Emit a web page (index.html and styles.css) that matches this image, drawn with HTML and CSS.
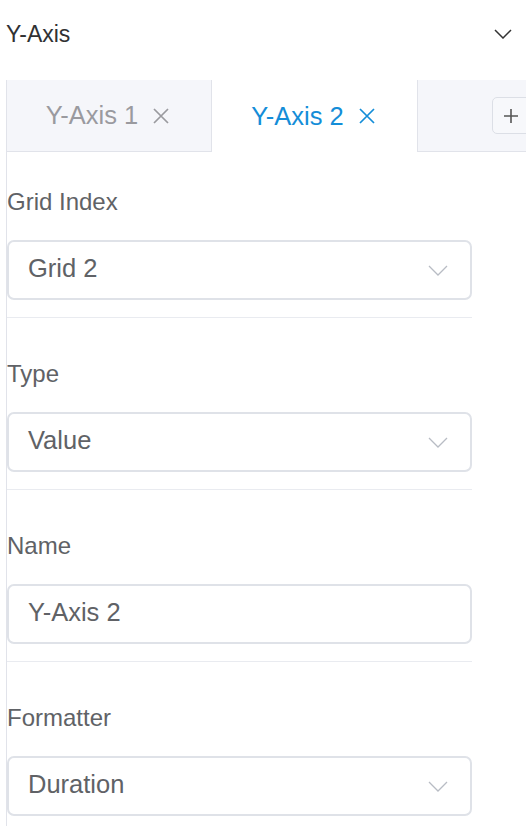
FILE: index.html
```html
<!DOCTYPE html>
<html>
<head>
<meta charset="utf-8">
<link rel="stylesheet" href="styles.css">
</head>
<body>
<div class="header">
  <span class="header-title">Y-Axis</span>
  <svg class="header-chev" width="18" height="10" viewBox="0 0 18 10"><polyline points="1,1 9,9 17,1" fill="none" stroke="#333" stroke-width="1.5"/></svg>
</div>
<div class="panel">
  <div class="tabs">
    <div class="tab">
      <span>Y-Axis 1</span>
      <svg class="x" width="16" height="16" viewBox="0 0 16 16"><path d="M1 1L15 15M15 1L1 15" stroke="#9a9a9f" stroke-width="1.7" fill="none"/></svg>
    </div>
    <div class="tab active">
      <span>Y-Axis 2</span>
      <svg class="x" width="16" height="16" viewBox="0 0 16 16"><path d="M1 1L15 15M15 1L1 15" stroke="#148dd8" stroke-width="1.7" fill="none"/></svg>
    </div>
    <div class="tab-rest">
      <div class="add-btn">
        <svg width="14" height="14" viewBox="0 0 14 14"><path d="M7 0V14M0 7H14" stroke="#555" stroke-width="1.6" fill="none"/></svg>
      </div>
    </div>
  </div>
  <div class="form">
    <div class="item first">
      <div class="label">Grid Index</div>
      <div class="field">
        <span>Grid 2</span>
        <svg width="20" height="11" viewBox="0 0 20 11"><polyline points="1,1 10,10 19,1" fill="none" stroke="#b8bcc4" stroke-width="1.3"/></svg>
      </div>
    </div>
    <div class="item">
      <div class="label">Type</div>
      <div class="field">
        <span>Value</span>
        <svg width="20" height="11" viewBox="0 0 20 11"><polyline points="1,1 10,10 19,1" fill="none" stroke="#b8bcc4" stroke-width="1.3"/></svg>
      </div>
    </div>
    <div class="item">
      <div class="label">Name</div>
      <div class="field">
        <span>Y-Axis 2</span>
      </div>
    </div>
    <div class="item last">
      <div class="label">Formatter</div>
      <div class="field">
        <span>Duration</span>
        <svg width="20" height="11" viewBox="0 0 20 11"><polyline points="1,1 10,10 19,1" fill="none" stroke="#b8bcc4" stroke-width="1.3"/></svg>
      </div>
    </div>
  </div>
</div>
</body>
</html>
```

FILE: styles.css
```css
html, body {
  margin: 0;
  padding: 0;
  background: #fff;
  overflow: hidden;
}
body {
  font-family: "Liberation Sans", Arial, sans-serif;
  width: 526px;
  height: 826px;
}
.header {
  height: 68px;
  margin-bottom: 12px;
  padding: 0 14px 0 6px;
  display: flex;
  align-items: center;
  justify-content: space-between;
}
.header-title {
  font-size: 23px;
  color: #303133;
}
.header-chev {
  display: block;
}
.panel {
  margin-left: 6px;
  border-left: 1px solid #e1e3ea;
  height: 746px;
}
.tabs {
  display: flex;
  height: 72px;
}
.tab {
  box-sizing: border-box;
  flex: none;
  width: 205px;
  height: 72px;
  display: flex;
  align-items: center;
  justify-content: center;
  gap: 15px;
  font-size: 25.5px;
  color: #9a9a9f;
  background: #f5f6fa;
  border-right: 1px solid #e1e3ea;
  border-bottom: 1px solid #e1e3ea;
  padding-right: 3px;
}
.tab.active {
  background: #fff;
  border-right: none;
  border-bottom: none;
  color: #148dd8;
}
.tab .x {
  display: block;
}
.tab-rest {
  box-sizing: border-box;
  flex: 1;
  min-width: 0;
  overflow: hidden;
  height: 72px;
  background: #f5f6fa;
  border-left: 1px solid #e1e3ea;
  border-bottom: 1px solid #e1e3ea;
  display: flex;
  align-items: center;
  padding-left: 74px;
  padding-bottom: 1px;
}
.add-btn {
  box-sizing: border-box;
  flex: none;
  width: 42px;
  height: 37px;
  border: 1px solid #dcdfe6;
  border-radius: 5px;
  background: #f7f8fb;
  display: flex;
  align-items: center;
  padding-left: 11px;
  padding-top: 2px;
}
.form {
  width: 465px;
}
.item {
  padding-top: 39px;
  padding-bottom: 17px;
  border-bottom: 1px solid #e9ebf0;
}
.item.first {
  padding-top: 33px;
}
.item.last {
  border-bottom: none;
}
.label {
  height: 34px;
  line-height: 34px;
  font-size: 24px;
  color: #606266;
  margin-bottom: 21px;
}
.field {
  box-sizing: border-box;
  height: 60px;
  border: 2px solid #dfe2e8;
  border-radius: 7px;
  display: flex;
  align-items: center;
  justify-content: space-between;
  padding: 0 22px 4px 19px;
  font-size: 25.5px;
  color: #606266;
}
.field svg {
  display: block;
  margin-top: 4px;
}
```
